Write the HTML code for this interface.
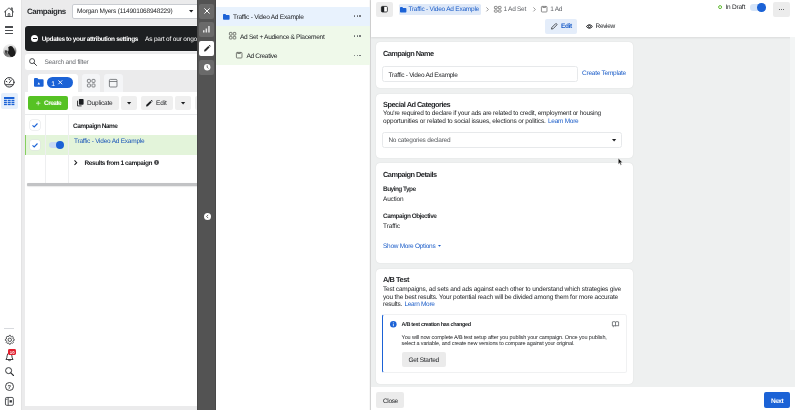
<!DOCTYPE html>
<html><head><meta charset="utf-8"><title>Ads Manager</title>
<style>
*{box-sizing:border-box;margin:0;padding:0}
html,body{width:795px;height:410px;overflow:hidden;background:#ebebec;font-family:"Liberation Sans",sans-serif;color:#1c1e21;text-rendering:geometricPrecision}
#app{position:absolute;left:0;top:0;width:795px;height:410px;will-change:transform}
.a{position:absolute}
.t{position:absolute;white-space:nowrap;line-height:10px}
.b{font-weight:bold}
svg{position:absolute;overflow:visible}
</style></head><body><div id="app">
<div class="a" style="left:0px;top:0px;width:21px;height:410px;background:#fff;"></div>
<div class="a" style="left:21px;top:0px;width:1px;height:410px;background:#e3e3e4;"></div>
<div class="a" style="left:371px;top:0px;width:424px;height:410px;background:#eef0f0;"></div>
<svg style="left:4.3px;top:6.8px;" width="10" height="10" viewBox="0 0 10 10"><g fill="none" stroke="#303235" stroke-width="0.8" stroke-linejoin="round" stroke-linecap="round"><path d="M0.4 5L5 0.8L9.6 5"/><path d="M1.5 4.2V9.5H8.5V4.2"/><path d="M4.2 9.5V7.2Q4.2 6.4 5 6.4Q5.8 6.4 5.8 7.2V9.5"/><path d="M7.2 2.5V0.9H8.3V3.6"/></g></svg>
<div class="a" style="left:5.4px;top:26.3px;width:8px;height:1.4px;background:#4a4c4f;border-radius:0.3px;"></div>
<div class="a" style="left:5.4px;top:29.5px;width:8px;height:1.4px;background:#4a4c4f;border-radius:0.3px;"></div>
<div class="a" style="left:5.4px;top:32.7px;width:8px;height:1.4px;background:#4a4c4f;border-radius:0.3px;"></div>
<svg style="left:2.7px;top:44.2px" width="13.6" height="13.6" viewBox="0 0 13.6 13.6"><defs><clipPath id="avc"><circle cx="6.8" cy="6.8" r="6.8"/></clipPath><linearGradient id="avg" x1="0" y1="0" x2="0.3" y2="1"><stop offset="0" stop-color="#fbfbfb"/><stop offset="0.45" stop-color="#d8d8d8"/><stop offset="0.75" stop-color="#6e6e6e"/><stop offset="1" stop-color="#9a9a9a"/></linearGradient><filter id="avb" x="-20%" y="-20%" width="140%" height="140%"><feGaussianBlur stdDeviation="0.45"/></filter></defs><g clip-path="url(#avc)"><rect width="13.6" height="13.6" fill="url(#avg)"/><g filter="url(#avb)"><path d="M5.2 3.2Q7.6 1.4 9.4 2.6Q11.4 5 12.2 8.2Q13 11 11.6 12.4Q9.4 13.6 7.2 12.6Q6.8 10.6 5.2 9.4Q4.4 8 5.6 6.6Q5.8 4.8 5.2 3.2z" fill="#1c1c1c"/><path d="M1.6 6.6Q3.4 5.6 4.8 7.4Q3 8.6 3.6 10.4Q2 9.2 1.6 6.6z" fill="#3a3a3a"/></g></g></svg>
<svg style="left:4px;top:77.1px;" width="10.6" height="10.6" viewBox="0 0 10 10"><g fill="none" stroke="#2b2d30" stroke-width="0.9" stroke-linecap="round"><circle cx="5" cy="5" r="4.5"/><path d="M1.6 7.3H8.4"/><path d="M5 5.6L6.9 2.9"/><path d="M2.2 4.2L2.8 4.5M5 1.9V2.5"/></g></svg>
<div class="a" style="left:1.2px;top:93px;width:16.6px;height:16px;background:#e5effc;border-radius:2px;"></div>
<svg style="left:4.1px;top:97px;" width="10.4" height="8.2" viewBox="0 0 10.4 8.2"><g fill="#1b62d6"><rect x="0" y="0" width="10.4" height="2"/><rect x="0" y="2.8" width="2.9" height="1.35"/><rect x="3.7" y="2.8" width="3" height="1.35"/><rect x="7.5" y="2.8" width="2.9" height="1.35"/><rect x="0" y="4.8" width="2.9" height="1.35"/><rect x="3.7" y="4.8" width="3" height="1.35"/><rect x="7.5" y="4.8" width="2.9" height="1.35"/><rect x="0" y="6.8" width="2.9" height="1.35"/><rect x="3.7" y="6.8" width="3" height="1.35"/><rect x="7.5" y="6.8" width="2.9" height="1.35"/></g></svg>
<div class="a" style="left:4.4px;top:328px;width:10px;height:0.6px;background:#d8dade;"></div>
<svg style="left:4.6px;top:335.3px;" width="9.6" height="9.6" viewBox="0 0 9.6 9.6"><g fill="none" stroke="#2b2d30" stroke-linejoin="round"><path d="M4.21 0.39L5.39 0.39L5.71 1.37L6.58 1.73L7.50 1.26L8.34 2.10L7.87 3.02L8.23 3.89L9.21 4.21L9.21 5.39L8.23 5.71L7.87 6.58L8.34 7.50L7.50 8.34L6.58 7.87L5.71 8.23L5.39 9.21L4.21 9.21L3.89 8.23L3.02 7.87L2.10 8.34L1.26 7.50L1.73 6.58L1.37 5.71L0.39 5.39L0.39 4.21L1.37 3.89L1.73 3.02L1.26 2.10L2.10 1.26L3.02 1.73L3.89 1.37z" stroke-width="0.8"/><circle cx="4.8" cy="4.8" r="1.7" stroke-width="0.8"/></g></svg>
<svg style="left:4.9px;top:351.6px;" width="9" height="9.5" viewBox="0 0 9 9.5"><g fill="none" stroke="#2b2d30" stroke-width="0.9" stroke-linejoin="round" stroke-linecap="round"><path d="M1.2 7.2Q2.1 6 2.1 3.9Q2.1 1.1 4.5 1.1Q6.9 1.1 6.9 3.9Q6.9 6 7.8 7.2z"/><path d="M3.5 8.4Q4.5 9.3 5.5 8.4"/></g></svg>
<div class="a" style="left:8.4px;top:349.3px;width:7.8px;height:6px;background:#e0202f;border-radius:1.4px;"></div>
<div class="t b" style="left:9.8px;top:348px;font-size:4.2px;color:#fff;letter-spacing:0.214px;">10</div>
<svg style="left:4.6px;top:366.6px;" width="9" height="9" viewBox="0 0 9 9"><circle cx="3.6" cy="3.6" r="3" fill="none" stroke="#2b2d30" stroke-width="0.95"/><path d="M5.8 5.8L8.5 8.5" stroke="#2b2d30" stroke-width="1.1" stroke-linecap="round"/></svg>
<svg style="left:4.7px;top:381.9px;" width="9" height="9" viewBox="0 0 9 9"><circle cx="4.5" cy="4.5" r="4" fill="none" stroke="#2b2d30" stroke-width="0.9"/></svg>
<div class="t b" style="left:7.55px;top:383px;font-size:5.8px;color:#2b2d30;">?</div>
<svg style="left:4.9px;top:397.4px;" width="8.8" height="8.8" viewBox="0 0 8.8 8.8"><rect x="0.45" y="0.45" width="7.9" height="7.9" rx="1.3" fill="none" stroke="#34363a" stroke-width="0.85"/><path d="M3.2 0.5V8.3" stroke="#34363a" stroke-width="0.8"/><rect x="4.6" y="3.2" width="2.3" height="2.3" fill="#34363a"/><rect x="1.3" y="1.7" width="1.1" height="1" fill="#34363a"/></svg>
<div class="t b" style="left:27px;top:7px;font-size:7.9px;color:#2a2c2f;letter-spacing:-0.416px;">Campaigns</div>
<div class="a" style="left:71.6px;top:4px;width:130px;height:14.5px;background:#fff;border-radius:2px;border:0.5px solid #c9ccd1;"></div>
<div class="t" style="left:77px;top:7px;font-size:6.5px;color:#1c1e21;letter-spacing:-0.201px;">Morgan Myers (114901068948229)</div>
<svg style="left:188.8px;top:9.8px;" width="4.4" height="2.6" viewBox="0 0 4.4 2.6"><path d="M0 0h4.4L2.2 2.6z" fill="#1c1e21"/></svg>
<div class="a" style="left:25px;top:25.8px;width:175px;height:24.8px;background:#1d1f21;border-radius:3px;box-shadow:0 0 0 0.5px rgba(255,255,255,.7);"></div>
<div class="a" style="left:31.3px;top:34.7px;width:7px;height:7px;background:#fff;border-radius:3.5px;"></div>
<div class="a" style="left:32.8px;top:37.6px;width:4px;height:1.3px;background:#1d1f21;"></div>
<div class="t b" style="left:41.7px;top:35px;font-size:6.5px;color:#fff;letter-spacing:-0.385px;">Updates to your attribution settings</div>
<div class="t" style="left:145px;top:35px;font-size:6.5px;color:#fff;letter-spacing:-0.171px;">As part of our ongoing</div>
<div class="a" style="left:25px;top:54px;width:175px;height:15.7px;background:#fff;border-radius:2.5px;"></div>
<svg style="left:29.4px;top:58px;" width="8" height="8" viewBox="0 0 8 8"><circle cx="3.1" cy="3.1" r="2.5" fill="none" stroke="#3a3c3f" stroke-width="0.9"/><path d="M5 5L7.5 7.5" stroke="#3a3c3f" stroke-width="1" stroke-linecap="round"/></svg>
<div class="t" style="left:44.4px;top:58px;font-size:6.5px;color:#65686d;letter-spacing:-0.185px;">Search and filter</div>
<div class="a" style="left:28px;top:73.6px;width:50px;height:20px;background:#fff;border-radius:3px 3px 0 0px;"></div>
<div class="a" style="left:81.6px;top:73.6px;width:18.6px;height:20px;background:#f4f5f7;border-radius:3px 3px 0 0px;"></div>
<div class="a" style="left:104px;top:73.6px;width:18.6px;height:20px;background:#f4f5f7;border-radius:3px 3px 0 0px;"></div>
<svg style="left:33.6px;top:78px;" width="9.6" height="8.8" viewBox="0 0 9.6 8.8"><path d="M0 1Q0 0 1 0H3.4L4.5 1.3H8.6Q9.6 1.3 9.6 2.3V7.8Q9.6 8.8 8.6 8.8H1Q0 8.8 0 7.8z" fill="#1b62d6"/><path d="M3.6 6.5L4.8 4.2L6 6.5z" fill="#fff"/></svg>
<div class="a" style="left:46.9px;top:76.6px;width:25.7px;height:11.9px;background:#1b62d6;border-radius:6px;"></div>
<div class="t" style="left:51.2px;top:80px;font-size:6.8px;color:#fff;">1</div>
<svg style="left:57.8px;top:80.3px;" width="4.6" height="4.6" viewBox="0 0 4.6 4.6"><path d="M.4 .4L4.2 4.2M4.2 .4L.4 4.2" stroke="#fff" stroke-width=".9"/></svg>
<svg style="left:86.6px;top:79px;" width="8.4" height="8.4" viewBox="0 0 8.4 8.4"><g fill="none" stroke="#5a5d61" stroke-width=".75"><rect x=".4" y=".4" width="3" height="3" rx=".7"/><rect x="5" y=".4" width="3" height="3" rx=".7"/><rect x=".4" y="5" width="3" height="3" rx=".7"/><rect x="5" y="5" width="3" height="3" rx=".7"/></g></svg>
<svg style="left:109px;top:79px;" width="8.4" height="8.4" viewBox="0 0 8.4 8.4"><g fill="none" stroke="#5a5d61" stroke-width=".75"><rect x=".4" y=".4" width="7.6" height="7.6" rx=".9"/><path d="M.4 2.5H8"/></g></svg>
<div class="a" style="left:24.6px;top:92.4px;width:176px;height:313.3px;background:#fff;border-radius:0 0 0 3pxpx;"></div>
<div class="a" style="left:28.4px;top:95.7px;width:39.8px;height:14.6px;background:#56c224;border-radius:2px;"></div>
<svg style="left:36.3px;top:100.7px;" width="4.4" height="4.4" viewBox="0 0 4.4 4.4"><path d="M2.2 0V4.4M0 2.2H4.4" stroke="#e8f7df" stroke-width=".8"/></svg>
<div class="t b" style="left:44px;top:99px;font-size:6.5px;color:#fff;letter-spacing:-0.506px;">Create</div>
<div class="a" style="left:72.4px;top:95.6px;width:46.3px;height:14.6px;background:#efefef;border-radius:2px;"></div>
<svg style="left:77px;top:99.4px;" width="6.6" height="7.4" viewBox="0 0 6.6 7.4"><rect x="1.9" y="0" width="4.7" height="5.8" rx=".8" fill="#1c1e21"/><path d="M.5 1.7V6.9H4.6" stroke="#1c1e21" stroke-width=".85" fill="none"/></svg>
<div class="t" style="left:87px;top:99px;font-size:6.5px;color:#1c1e21;letter-spacing:-0.179px;">Duplicate</div>
<div class="a" style="left:120.6px;top:95.6px;width:16.5px;height:14.6px;background:#efefef;border-radius:2px;"></div>
<svg style="left:126.8px;top:101.8px;" width="4.2" height="2.5" viewBox="0 0 4.2 2.5"><path d="M0 0h4.2L2.1 2.5z" fill="#1c1e21"/></svg>
<div class="a" style="left:141px;top:95.6px;width:32.2px;height:14.6px;background:#efefef;border-radius:2px;"></div>
<svg style="left:146px;top:100.2px;" width="6.6" height="6.6" viewBox="0 0 6.6 6.6"><path d="M0 6.6L.4 4.8L4.3 .9L5.7 2.3L1.8 6.2z" fill="#1c1e21"/><path d="M4.8 .5L5.2 .1Q5.6 -.1 5.9 .2L6.4 .7Q6.7 1 6.5 1.4L6.1 1.8z" fill="#1c1e21"/></svg>
<div class="t" style="left:156px;top:99px;font-size:6.5px;color:#1c1e21;letter-spacing:-0.151px;">Edit</div>
<div class="a" style="left:175px;top:95.6px;width:16.3px;height:14.6px;background:#efefef;border-radius:2px;"></div>
<svg style="left:181px;top:101.8px;" width="4.2" height="2.5" viewBox="0 0 4.2 2.5"><path d="M0 0h4.2L2.1 2.5z" fill="#1c1e21"/></svg>
<div class="a" style="left:195px;top:95.6px;width:6px;height:14.6px;background:#efefef;border-radius:2px;"></div>
<div class="a" style="left:24.6px;top:114px;width:176px;height:1px;background:#e9eaec;"></div>
<div class="a" style="left:24.6px;top:135px;width:176px;height:20px;background:#e3f4da;"></div>
<div class="a" style="left:24.8px;top:135px;width:1.7px;height:20px;background:#86cf5e;"></div>
<div class="a" style="left:45px;top:114.6px;width:1px;height:68px;background:#eeeff0;"></div>
<div class="a" style="left:68px;top:114.6px;width:1px;height:68px;background:#eeeff0;"></div>
<div class="a" style="left:29.8px;top:119.7px;width:10.4px;height:10.4px;background:#fff;border-radius:2.5px;box-shadow:0 0 0 0.5px #dfe1e4;"></div>
<svg style="left:32.3px;top:122.9px;" width="6" height="4.6" viewBox="0 0 6 4.6"><path d="M.5 2.4L2.2 4L5.5 .5" stroke="#1b62d6" stroke-width="1.1" fill="none"/></svg>
<div class="a" style="left:29.8px;top:139.7px;width:10.4px;height:10.4px;background:#fff;border-radius:2.5px;box-shadow:0 0 0 0.5px #dfe1e4;"></div>
<svg style="left:32.3px;top:142.89999999999998px;" width="6" height="4.6" viewBox="0 0 6 4.6"><path d="M.5 2.4L2.2 4L5.5 .5" stroke="#1b62d6" stroke-width="1.1" fill="none"/></svg>
<div class="t b" style="left:73px;top:122px;font-size:6.5px;color:#1c1e21;letter-spacing:-0.503px;">Campaign Name</div>
<div class="a" style="left:49.4px;top:141.8px;width:14px;height:6.4px;background:#c6d9f5;border-radius:3.2px;"></div>
<div class="a" style="left:55.8px;top:140.7px;width:8.6px;height:8.6px;background:#1b62d6;border-radius:4.3px;"></div>
<div class="t" style="left:74px;top:137px;font-size:6.5px;color:#1a55b8;letter-spacing:-0.234px;">Traffic - Video Ad Example</div>
<svg style="left:73.5px;top:159.7px;" width="3.2" height="5.4" viewBox="0 0 3.2 5.4"><path d="M.5 .4L2.7 2.7L.5 5" stroke="#1c1e21" stroke-width="1.05" fill="none"/></svg>
<div class="t b" style="left:84.6px;top:159px;font-size:6.5px;color:#1c1e21;letter-spacing:-0.431px;">Results from 1 campaign</div>
<div class="a" style="left:154px;top:160px;width:4.7px;height:4.7px;background:#4b4d50;border-radius:2.4px;"></div>
<div class="a" style="left:156.1px;top:161px;width:0.5px;height:0.6px;background:#aaa;"></div>
<div class="a" style="left:156.1px;top:162px;width:0.5px;height:1.7px;background:#aaa;"></div>
<div class="a" style="left:26.5px;top:183.4px;width:174px;height:2.7px;background:#c2c3c5;border-radius:1px;box-shadow:0 0.5px 1px rgba(0,0,0,.15);"></div>
<div class="a" style="left:197px;top:0px;width:19.2px;height:410px;background:#535353;border-radius:0px;box-shadow:inset 1px 0 0 #484848,inset -1px 0 0 #484848;"></div>
<div class="a" style="left:199.4px;top:3.6px;width:15px;height:15px;background:#6a6a6a;border-radius:2px;"></div>
<svg style="left:203.9px;top:8.1px;" width="6" height="6" viewBox="0 0 6 6"><path d="M.4 .4L5.6 5.6M5.6 .4L.4 5.6" stroke="#fff" stroke-width="1"/></svg>
<div class="a" style="left:199.4px;top:22.4px;width:15px;height:15px;background:#6a6a6a;border-radius:2px;"></div>
<svg style="left:203.4px;top:26.4px;" width="7" height="6.6" viewBox="0 0 7 6.6"><path d="M0 4.2H1.5V6.6H0zM2.6 2.6H4.1V6.6H2.6zM5.2 0H6.7V6.6H5.2z" fill="#e4e4e4"/></svg>
<div class="a" style="left:199.4px;top:41.2px;width:15px;height:15px;background:#fff;border-radius:2px;"></div>
<svg style="left:203.6px;top:45.4px;" width="6.6" height="6.6" viewBox="0 0 6.6 6.6"><path d="M0 6.6L.4 4.8L4.3 .9L5.7 2.3L1.8 6.2z" fill="#2a2a2a"/><path d="M4.8 .5L5.2 .1Q5.6 -.1 5.9 .2L6.4 .7Q6.7 1 6.5 1.4L6.1 1.8z" fill="#2a2a2a"/></svg>
<div class="a" style="left:199.4px;top:60px;width:15px;height:15px;background:#6a6a6a;border-radius:2px;"></div>
<svg style="left:203.7px;top:64.3px;" width="6.4" height="6.4" viewBox="0 0 6.4 6.4"><circle cx="3.2" cy="3.2" r="3.2" fill="#fff"/><path d="M3.2 1.3V3.3L4.5 4.4" stroke="#4a4a4a" stroke-width=".8" fill="none"/></svg>
<svg style="left:203.5px;top:212.5px;" width="7" height="7" viewBox="0 0 7 7"><circle cx="3.5" cy="3.5" r="3.5" fill="#fff"/><path d="M4.2 1.9L2.6 3.5L4.2 5.1" stroke="#4a4a4a" stroke-width=".85" fill="none"/></svg>
<div class="a" style="left:216.3px;top:0px;width:153.9px;height:410px;background:#fff;"></div>
<div class="a" style="left:369.4px;top:0px;width:1.6px;height:410px;background:linear-gradient(90deg,rgba(0,0,0,0),rgba(0,0,0,.13));"></div>
<div class="a" style="left:216.3px;top:7px;width:153.9px;height:19px;background:#e8f2fd;"></div>
<div class="a" style="left:216.3px;top:26px;width:153.9px;height:39.2px;background:#eff9ea;"></div>
<svg style="left:222.6px;top:13.6px;" width="6.6" height="5.8" viewBox="0 0 6.6 5.8"><path d="M0 .8Q0 0 .8 0H2.4L3.2 .9H5.8Q6.6 .9 6.6 1.7V5Q6.6 5.8 5.8 5.8H.8Q0 5.8 0 5z" fill="#1b62d6"/></svg>
<div class="t" style="left:233px;top:13px;font-size:6.6px;color:#1c1e21;letter-spacing:-0.268px;">Traffic - Video Ad Example</div>
<svg style="left:229px;top:32px;" width="7.2" height="7.4" viewBox="0 0 7.2 7.4"><g fill="none" stroke="#50534f" stroke-width=".75"><rect x=".4" y=".4" width="2.6" height="2.7" rx=".6"/><rect x="4.2" y=".4" width="2.6" height="2.7" rx=".6"/><rect x=".4" y="4.3" width="2.6" height="2.7" rx=".6"/><rect x="4.2" y="4.3" width="2.6" height="2.7" rx=".6"/></g></svg>
<div class="t" style="left:240px;top:33px;font-size:6.6px;color:#1c1e21;letter-spacing:-0.319px;">Ad Set + Audience &amp; Placement</div>
<svg style="left:236.2px;top:52.3px;" width="6.4" height="6.4" viewBox="0 0 6.4 6.4"><g fill="none" stroke="#50534f" stroke-width=".75"><rect x=".4" y=".4" width="5.6" height="5.6" rx=".8"/><path d="M1.6 .4V1.5H4.4V.4"/></g></svg>
<div class="t" style="left:246.4px;top:52px;font-size:6.6px;color:#1c1e21;letter-spacing:-0.350px;">Ad Creative</div>
<div class="a" style="left:354.0px;top:15.3px;width:1.4px;height:1.4px;background:#63666a;border-radius:0.7px;"></div>
<div class="a" style="left:356.7px;top:15.3px;width:1.4px;height:1.4px;background:#63666a;border-radius:0.7px;"></div>
<div class="a" style="left:359.4px;top:15.3px;width:1.4px;height:1.4px;background:#63666a;border-radius:0.7px;"></div>
<div class="a" style="left:354.0px;top:35.3px;width:1.4px;height:1.4px;background:#63666a;border-radius:0.7px;"></div>
<div class="a" style="left:356.7px;top:35.3px;width:1.4px;height:1.4px;background:#63666a;border-radius:0.7px;"></div>
<div class="a" style="left:359.4px;top:35.3px;width:1.4px;height:1.4px;background:#63666a;border-radius:0.7px;"></div>
<div class="a" style="left:354.0px;top:54.9px;width:1.4px;height:1.4px;background:#63666a;border-radius:0.7px;"></div>
<div class="a" style="left:356.7px;top:54.9px;width:1.4px;height:1.4px;background:#63666a;border-radius:0.7px;"></div>
<div class="a" style="left:359.4px;top:54.9px;width:1.4px;height:1.4px;background:#63666a;border-radius:0.7px;"></div>
<div class="a" style="left:371px;top:0px;width:424px;height:36.8px;background:#fff;border-radius:0px;box-shadow:0 0.5px 2px rgba(0,0,0,.09);"></div>
<div class="a" style="left:376px;top:2px;width:16.6px;height:15px;background:#ececec;border-radius:2px;"></div>
<svg style="left:381.2px;top:6.2px;" width="6.8" height="6.4" viewBox="0 0 6.8 6.4"><rect x=".4" y=".4" width="6" height="5.6" rx="1.1" fill="#fff" stroke="#1c1e21" stroke-width=".8"/><path d="M1.2 .4H3.2V6H1.2Q.4 6 .4 5.2V1.2Q.4 .4 1.2 .4z" fill="#1c1e21"/></svg>
<div class="a" style="left:398.8px;top:4px;width:82.4px;height:10.8px;background:#dfe9f8;border-radius:1.5px;"></div>
<svg style="left:400.2px;top:6.6px;" width="6.4" height="5.6" viewBox="0 0 6.4 5.6"><path d="M0 .8Q0 0 .8 0H2.3L3.1 .9H5.6Q6.4 .9 6.4 1.7V4.8Q6.4 5.6 5.6 5.6H.8Q0 5.6 0 4.8z" fill="#1b62d6"/></svg>
<div class="t" style="left:408.4px;top:5px;font-size:6.5px;color:#1a5cc8;letter-spacing:-0.226px;">Traffic - Video Ad Example</div>
<svg style="left:486px;top:6.6px;" width="2.8" height="4.8" viewBox="0 0 2.8 4.8"><path d="M.4 .4L2.4 2.4L.4 4.4" stroke="#777" stroke-width=".75" fill="none"/></svg>
<svg style="left:494.2px;top:6px;" width="7.5" height="6.6" viewBox="0 0 7.5 6.6"><g fill="none" stroke="#666" stroke-width=".75"><rect x=".4" y=".4" width="2.8" height="2.3" rx=".6"/><rect x="4.3" y=".4" width="2.8" height="2.3" rx=".6"/><rect x=".4" y="3.9" width="2.8" height="2.3" rx=".6"/><rect x="4.3" y="3.9" width="2.8" height="2.3" rx=".6"/></g></svg>
<div class="t" style="left:503.6px;top:5px;font-size:6.5px;color:#606368;letter-spacing:-0.272px;">1 Ad Set</div>
<svg style="left:533px;top:6.6px;" width="2.8" height="4.8" viewBox="0 0 2.8 4.8"><path d="M.4 .4L2.4 2.4L.4 4.4" stroke="#777" stroke-width=".75" fill="none"/></svg>
<svg style="left:541.2px;top:6.2px;" width="6.4" height="6.4" viewBox="0 0 6.4 6.4"><g fill="none" stroke="#666" stroke-width=".75"><rect x=".4" y=".4" width="5.6" height="5.6" rx=".8"/><path d="M1.8 .4V1.5H4.6V.4"/></g></svg>
<div class="t" style="left:550.2px;top:5px;font-size:6.5px;color:#606368;letter-spacing:-0.304px;">1 Ad</div>
<svg style="left:718px;top:5.4px;" width="4.2" height="4.2" viewBox="0 0 4.2 4.2"><circle cx="2.1" cy="2.1" r="1.5" fill="#fff" stroke="#5cb82e" stroke-width="1"/></svg>
<div class="t" style="left:725.4px;top:3px;font-size:6.5px;color:#1c1e21;letter-spacing:-0.214px;">In Draft</div>
<div class="a" style="left:750px;top:4px;width:15px;height:6.6px;background:#d5e4f8;border-radius:3.3px;"></div>
<div class="a" style="left:757.4px;top:3px;width:8.6px;height:8.6px;background:#1b62d6;border-radius:4.3px;"></div>
<div class="a" style="left:772.6px;top:2px;width:17px;height:15px;background:#ececec;border-radius:2px;"></div>
<div class="a" style="left:778.5px;top:9px;width:1.1px;height:1.1px;background:#3a3c3f;border-radius:0.55px;"></div>
<div class="a" style="left:780.6px;top:9px;width:1.1px;height:1.1px;background:#3a3c3f;border-radius:0.55px;"></div>
<div class="a" style="left:782.7px;top:9px;width:1.1px;height:1.1px;background:#3a3c3f;border-radius:0.55px;"></div>
<div class="a" style="left:545.4px;top:19px;width:31.6px;height:14.6px;background:#e4edfa;border-radius:2px;"></div>
<svg style="left:551px;top:23px;" width="6.6" height="6.6" viewBox="0 0 6.6 6.6"><path d="M.5 6.1L.9 4.4L4.6 .7Q5.1 .3 5.6 .8L5.8 1Q6.3 1.5 5.8 2L2.2 5.7z" fill="none" stroke="#26282b" stroke-width=".75" stroke-linejoin="round"/></svg>
<div class="t b" style="left:561px;top:22px;font-size:6.5px;color:#1a5cc8;letter-spacing:-0.370px;">Edit</div>
<svg style="left:585.5px;top:23.7px;" width="6.8" height="5" viewBox="0 0 6.8 5"><path d="M.4 2.5Q3.4 -1.1 6.4 2.5Q3.4 6.1 .4 2.5z" fill="none" stroke="#1c1e21" stroke-width=".95"/><circle cx="3.4" cy="2.5" r="1.05" fill="none" stroke="#1c1e21" stroke-width=".9"/></svg>
<div class="t" style="left:595.6px;top:22px;font-size:6.5px;color:#1c1e21;letter-spacing:-0.352px;">Review</div>
<div class="a" style="left:376px;top:42.4px;width:257.2px;height:45.6px;background:#fff;border-radius:4px;box-shadow:0 0 1px rgba(0,0,0,.16);"></div>
<div class="t b" style="left:383px;top:49px;font-size:7.4px;color:#2a2c2f;letter-spacing:-0.563px;">Campaign Name</div>
<div class="a" style="left:382.3px;top:66px;width:195.7px;height:15.8px;background:#fff;border-radius:2.5px;border:1px solid #e7e9eb;"></div>
<div class="t" style="left:388.6px;top:71px;font-size:6.5px;color:#1c1e21;letter-spacing:-0.288px;">Traffic - Video Ad Example</div>
<div class="t" style="left:582px;top:69px;font-size:6.5px;color:#1a5cc8;letter-spacing:-0.239px;">Create Template</div>
<div class="a" style="left:376px;top:94px;width:257.2px;height:63.6px;background:#fff;border-radius:4px;box-shadow:0 0 1px rgba(0,0,0,.16);"></div>
<div class="t b" style="left:383px;top:100px;font-size:7.4px;color:#2a2c2f;letter-spacing:-0.503px;">Special Ad Categories</div>
<div class="t" style="left:383px;top:109px;font-size:6.5px;color:#1c1e21;letter-spacing:-0.202px;">You're required to declare if your ads are related to credit, employment or housing</div>
<div class="t" style="left:383px;top:117px;font-size:6.5px;color:#1c1e21;letter-spacing:-0.155px;">opportunities or related to social issues, elections or politics.</div>
<div class="t" style="left:548px;top:117px;font-size:6.5px;color:#1a5cc8;letter-spacing:-0.285px;">Learn More</div>
<div class="a" style="left:382.3px;top:132px;width:240.2px;height:15.8px;background:#fff;border-radius:2.5px;border:1px solid #e7e9eb;"></div>
<div class="t" style="left:388.4px;top:136px;font-size:6.5px;color:#55585c;letter-spacing:-0.221px;">No categories declared</div>
<svg style="left:611.6px;top:139px;" width="4.2" height="2.5" viewBox="0 0 4.2 2.5"><path d="M0 0h4.2L2.1 2.5z" fill="#1c1e21"/></svg>
<div class="a" style="left:376px;top:163px;width:257.2px;height:100.4px;background:#fff;border-radius:4px;box-shadow:0 0 1px rgba(0,0,0,.16);"></div>
<div class="t b" style="left:383px;top:170px;font-size:7.4px;color:#2a2c2f;letter-spacing:-0.527px;">Campaign Details</div>
<div class="t b" style="left:383px;top:185px;font-size:6.5px;color:#2a2c2f;letter-spacing:-0.539px;">Buying Type</div>
<div class="t" style="left:383px;top:195px;font-size:6.5px;color:#1c1e21;letter-spacing:-0.184px;">Auction</div>
<div class="t b" style="left:383px;top:212px;font-size:6.5px;color:#2a2c2f;letter-spacing:-0.506px;">Campaign Objective</div>
<div class="t" style="left:383px;top:222px;font-size:6.5px;color:#1c1e21;letter-spacing:-0.100px;">Traffic</div>
<div class="t" style="left:383px;top:242px;font-size:6.5px;color:#1a5cc8;letter-spacing:-0.276px;">Show More Options</div>
<svg style="left:437.6px;top:245.2px;" width="3" height="1.8" viewBox="0 0 3 1.8"><path d="M0 0h3L1.5 1.8z" fill="#1a5cc8"/></svg>
<div class="a" style="left:376px;top:268.6px;width:257.2px;height:115.4px;background:#fff;border-radius:4px;box-shadow:0 0 1px rgba(0,0,0,.16);"></div>
<div class="t b" style="left:383px;top:275px;font-size:7.4px;color:#2a2c2f;letter-spacing:-0.430px;">A/B Test</div>
<div class="t" style="left:383px;top:285px;font-size:6.5px;color:#1c1e21;letter-spacing:-0.182px;">Test campaigns, ad sets and ads against each other to understand which strategies give</div>
<div class="t" style="left:383px;top:293px;font-size:6.5px;color:#1c1e21;letter-spacing:-0.177px;">you the best results. Your potential reach will be divided among them for more accurate</div>
<div class="t" style="left:383px;top:300px;font-size:6.5px;color:#1c1e21;letter-spacing:-0.244px;">results.</div>
<div class="t" style="left:404.4px;top:300px;font-size:6.5px;color:#1a5cc8;letter-spacing:-0.305px;">Learn More</div>
<div class="a" style="left:382.4px;top:314.4px;width:244.2px;height:58.6px;background:#fff;border-radius:2.5px;border:0.5px solid #f0f1f2;border-left:1.2px solid #1b62d6;"></div>
<svg style="left:389.7px;top:321.1px;" width="6.6" height="6.6" viewBox="0 0 6.6 6.6"><circle cx="3.3" cy="3.3" r="3.3" fill="#1b62d6"/><rect x="2.9" y="1.4" width=".8" height=".8" fill="#fff"/><rect x="2.9" y="2.8" width=".8" height="2.4" fill="#fff"/></svg>
<div class="t b" style="left:401.6px;top:320px;font-size:5.5px;color:#1c1e21;letter-spacing:-0.333px;">A/B test creation has changed</div>
<svg style="left:612.4px;top:321px;" width="7" height="6.4" viewBox="0 0 7 6.4"><g fill="none" stroke="#55585c" stroke-width=".75" stroke-linejoin="round"><path d="M.4 .9Q2 .2 3.5 1Q5 .2 6.6 .9V4.9Q5 4.3 3.5 5Q2 4.3 .4 4.9z"/><path d="M3.5 1V5"/><path d="M1.4 5.2V6.2"/></g></svg>
<div class="t" style="left:401.6px;top:333px;font-size:5.5px;color:#1c1e21;letter-spacing:-0.124px;">You will now complete A/B test setup after you publish your campaign. Once you publish,</div>
<div class="t" style="left:401.6px;top:339px;font-size:5.5px;color:#1c1e21;letter-spacing:-0.144px;">select a variable, and create new versions to compare against your original.</div>
<div class="a" style="left:402px;top:352px;width:43.6px;height:15px;background:#ebebeb;border-radius:2px;"></div>
<div class="t" style="left:408.4px;top:356px;font-size:6.5px;color:#1c1e21;letter-spacing:-0.241px;">Get Started</div>
<svg style="left:617.7px;top:158.2px;" width="5" height="8" viewBox="0 0 5 8"><path d="M.3 .2V6.2L1.7 4.9L2.7 7.2L3.6 6.8L2.6 4.6H4.5z" fill="#111" stroke="#fff" stroke-width=".4"/></svg>
<div class="a" style="left:371px;top:387.2px;width:424px;height:22.8px;background:#fff;box-shadow:0 -0.5px 1px rgba(0,0,0,.10);"></div>
<div class="a" style="left:376px;top:392.4px;width:28.4px;height:15.2px;background:#ebebeb;border-radius:2px;"></div>
<div class="t" style="left:383px;top:397px;font-size:6.5px;color:#1c1e21;letter-spacing:-0.365px;">Close</div>
<div class="a" style="left:764px;top:392.4px;width:25.6px;height:15.2px;background:#1b62d6;border-radius:2px;"></div>
<div class="t b" style="left:771px;top:397px;font-size:6.5px;color:#fff;letter-spacing:-0.473px;">Next</div>
<div class="a" style="left:790.4px;top:37px;width:4.6px;height:292.6px;background:#f3f5f5;border-radius:0 0 2px 2pxpx;"></div>
</div></body></html>
